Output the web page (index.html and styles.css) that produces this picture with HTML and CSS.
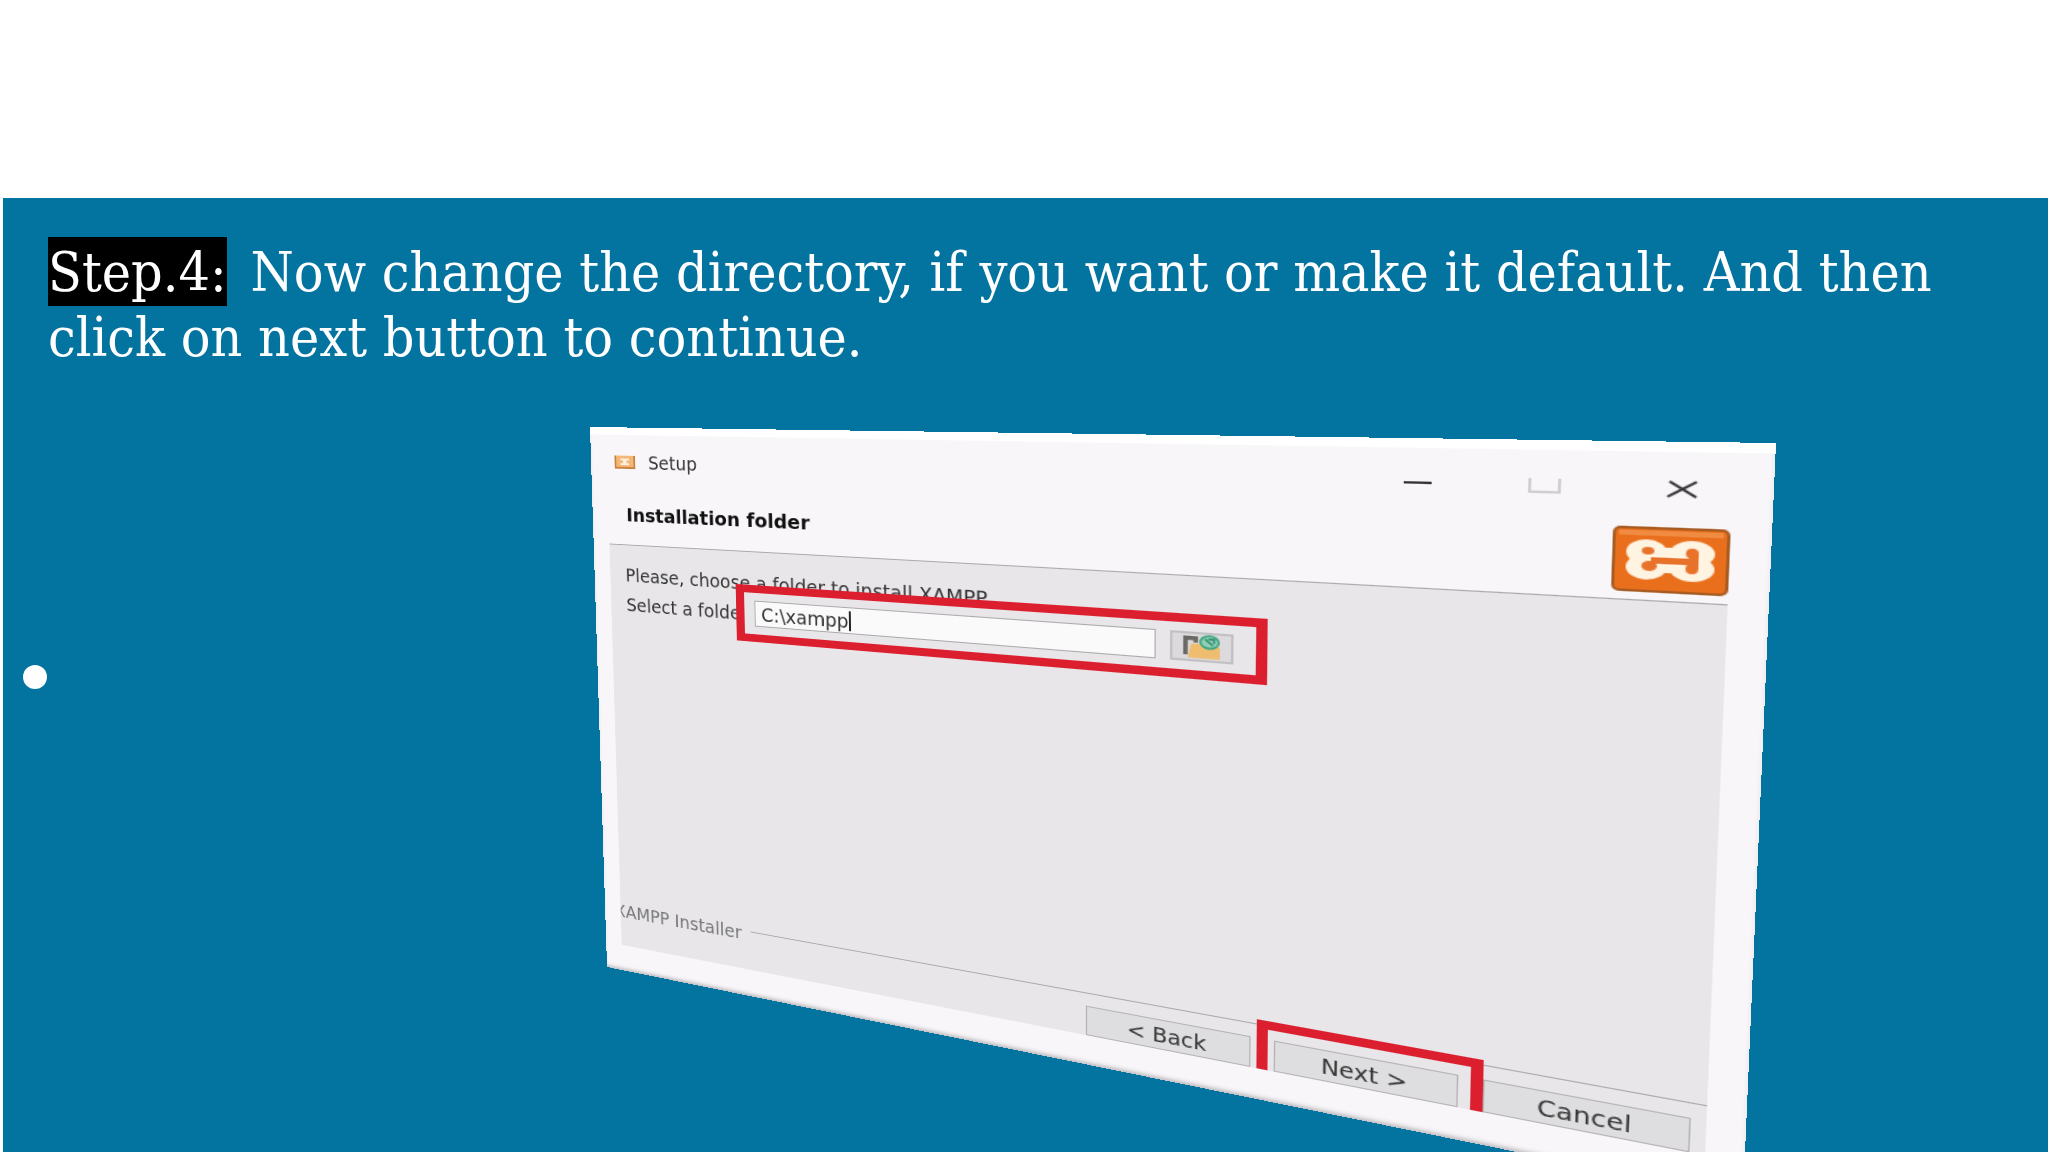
FILE: index.html
```
<!DOCTYPE html>
<html lang="en">
<head>
    <meta charset="UTF-8">
    <meta name="viewport" content="width=device-width, initial-scale=1.0">
    <title>XAMPP Installation - Step 4</title>
    <link rel="stylesheet" href="styles.css">
</head>
<body>
    <main class="slide">
        <h1 class="step-text"><span class="step-number">Step.4:</span>Now change the directory, if you want or make it default. And then click on next button to continue.</h1>

        <div class="content">
            <span class="bullet"></span>

            <form class="window">
                <div class="title-bar">
                    <svg class="title-icon" viewBox="0 0 26 16">
                        <rect x="1" y="1" width="24" height="14" rx="1" fill="#f3b878"/>
                        <path d="M2 1v13h22V1" fill="none" stroke="#c9823e" stroke-width="2"/>
                        <path d="M8 5h4v5H8M18 5h-4v5h4" fill="none" stroke="#fdeedd" stroke-width="2"/>
                    </svg>
                    <span class="title">Setup</span>
                    <div class="window-controls">
                        <button type="button" aria-label="Minimize">
                            <svg viewBox="0 0 22 18"><path d="M2 9h20" stroke="#333" stroke-width="2"/></svg>
                        </button>
                        <button type="button" aria-label="Maximize">
                            <svg viewBox="0 0 22 18"><path d="M1 3v11h20V3" fill="none" stroke="#cfcdd0" stroke-width="2"/></svg>
                        </button>
                        <button type="button" aria-label="Close">
                            <svg viewBox="0 0 22 18"><path d="M3 3l17 12M20 3L2 15" stroke="#333" stroke-width="2"/></svg>
                        </button>
                    </div>
                </div>

                <div class="header">
                    <h2>Installation folder</h2>
                    <svg class="logo" viewBox="0 0 74 52">
                        <rect x="1" y="1" width="72" height="50" rx="4" fill="#ea6f1d" stroke="#a85c22" stroke-width="2"/>
                        <path d="M4 5h66" stroke="#f08b42" stroke-width="4"/>
                        <g fill="#fff3e2">
                            <ellipse cx="22" cy="20" rx="13" ry="10"/>
                            <ellipse cx="22" cy="32" rx="13" ry="10"/>
                            <ellipse cx="51" cy="20" rx="14" ry="10"/>
                            <ellipse cx="51" cy="32" rx="14" ry="10"/>
                            <rect x="28" y="16" width="18" height="20"/>
                        </g>
                        <g fill="#e8722a">
                            <ellipse cx="23" cy="19" rx="4" ry="3"/>
                            <ellipse cx="24" cy="31" rx="5" ry="4"/>
                            <ellipse cx="51" cy="20" rx="4" ry="4"/>
                            <ellipse cx="51" cy="32" rx="4" ry="4"/>
                            <rect x="25" y="24" width="28" height="5"/>
                            <rect x="49" y="20" width="6" height="12"/>
                        </g>
                    </svg>
                </div>

                <div class="panel">
                    <p class="hint">Please, choose a folder to install XAMPP</p>
                    <div class="folder-row">
                        <label for="folder">Select a folder</label>
                        <div class="highlight">
                            <div class="folder-input">
                                <input type="text" id="folder" value="C:\xampp" size="7">
                                <span class="caret"></span>
                            </div>
                            <button type="button" class="browse" aria-label="Browse">
                                <svg viewBox="0 0 34 24">
                                    <path d="M3 20V4h9v4" fill="none" stroke="#6b6864" stroke-width="4"/>
                                    <path d="M8 9h22l3 3v11H5z" fill="#efbd70"/>
                                    <ellipse cx="24" cy="7" rx="8" ry="6" fill="#8fd0b4" stroke="#3fa583" stroke-width="2"/>
                                    <path d="M20 4l7 6M23 4h5v4" fill="none" stroke="#3b9377" stroke-width="2"/>
                                </svg>
                            </button>
                        </div>
                    </div>

                    <div class="divider">
                        <span>XAMPP Installer</span>
                    </div>
                    <div class="buttons">
                        <button type="button">&lt; Back</button>
                        <div class="highlight-next">
                            <button type="button">Next &gt;</button>
                        </div>
                        <button type="button">Cancel</button>
                    </div>
                </div>
            </form>
        </div>
    </main>
</body>
</html>
```
FILE: styles.css
```
* {
    box-sizing: border-box;
}
body {
    margin: 0;
    padding: 198px 0 0 3px; /* White band above the slide */
    height: 100vh;
    background-color: #fff;
    overflow: hidden;
}
.slide {
    height: 100%;
    padding: 42px 60px 0 20px;
    background-color: #03739f;
    overflow: hidden;
}
.step-text {
    margin: 0 0 57px;
    padding-left: 25px;
    font-family: 'DejaVu Serif Condensed', 'DejaVu Serif', serif;
    font-size: 55px;
    font-weight: 400;
    line-height: 65px;
    color: #fff;
}
.step-number {
    margin-right: 24px;
    padding: 3px 0 2px;
    background-color: #000;
}
.content {
    display: flex;
    align-items: flex-start;
}
.bullet {
    width: 24px;
    height: 24px;
    margin-top: 238px;
    border-radius: 50%;
    background-color: #fff;
}

/* Setup window, tilted in perspective */
.window {
    display: flex;
    flex-direction: column;
    flex: none;
    width: 1000px;
    height: 600px;
    margin-left: 543px;
    border-top: 8px solid #fff;
    background-color: #f8f6f9;
    box-shadow: inset 0 -4px 4px -2px #b5b3b6;
    font-family: 'DejaVu Sans', sans-serif;
    font-size: 19px;
    color: #333;
    transform-origin: 0 0;
    transform: matrix3d(0.83541, 0.01127, 0, -0.00029561, 0.029337, 0.93188, 0, 0.000059045, 0, 0, 1, 0, 0, 0, 0, 1);
}
.window button,
.window input {
    padding: 0;
    font: inherit;
    color: inherit;
}
.title-bar {
    display: flex;
    align-items: center;
    height: 58px;
    padding: 0 45px 0 27px;
}
.title-icon {
    width: 26px;
    height: 16px;
    margin-right: 14px;
}
.window-controls {
    display: flex;
    gap: 67px;
    margin-left: auto;
}
.window-controls button {
    display: flex;
    border: 0;
    background: none;
}
.window-controls svg {
    width: 22px;
    height: 18px;
}
.header {
    display: flex;
    align-items: center;
    justify-content: space-between;
    height: 59px;
    padding: 0 25px 6px 40px;
}
.header h2 {
    margin: 0;
    font-size: 20px;
    color: #111;
}
.logo {
    width: 74px;
    height: 52px;
}
.panel {
    display: flex;
    flex-direction: column;
    height: 446px;
    margin: 0 25px 0 19px;
    border-top: 1px solid #aaa;
    background-color: #e8e6e9;
    overflow: hidden;
}
.hint {
    margin: 20px 0 0 18px;
    line-height: 24px;
}
.folder-row {
    display: flex;
    align-items: center;
    margin: -10px 0 0 18px;
}
/* The highlight box covers the end of the label */
.folder-row label {
    width: 125px;
    white-space: nowrap;
}
.highlight {
    display: flex;
    gap: 12px;
    width: 494px;
    height: 59px;
    padding: 8px 18px 8px 11px;
    border: 8px solid #dc1f2e;
    border-width: 8px 9px;
    background-color: #e8e6e9;
    position: relative;
}
.folder-input {
    display: flex;
    flex: 1;
    align-items: center;
    padding-left: 6px;
    border: 1px solid #aaa;
    background-color: #fbfafb;
}
.folder-input input {
    width: 92px;
    border: 0;
    outline: 0;
    background: none;
}
.caret {
    width: 2px;
    height: 20px;
    background-color: #222;
}
.browse {
    display: flex;
    align-items: center;
    justify-content: center;
    width: 52px;
    border: 2px solid #c2c0c3;
    background-color: #dcdadd;
}
.browse svg {
    width: 32px;
    height: 23px;
}
.divider {
    display: flex;
    align-items: center;
    gap: 10px;
    height: 24px;
    margin: auto 0 0 -7px;
    color: #777;
}
.divider span {
    padding-top: 6px;
}
.divider::after {
    content: '';
    flex: 1;
    border-top: 1px solid #aaa;
}
.buttons {
    display: flex;
    align-items: flex-end;
    justify-content: flex-end;
    height: 46px;
    margin-top: -16px;
    padding-right: 10px;
}
.buttons button {
    width: 141px;
    height: 29px;
    border: 1px solid #b4b2b5;
    background-color: #dedddf;
}
.highlight-next {
    height: 46px;
    margin-left: 5px;
    padding: 9px 9px 0 5px;
    border: 9px solid #dc1f2e;
    border-top-width: 8px;
    border-bottom: 0;
    background-color: #e8e6e9;
}
```
